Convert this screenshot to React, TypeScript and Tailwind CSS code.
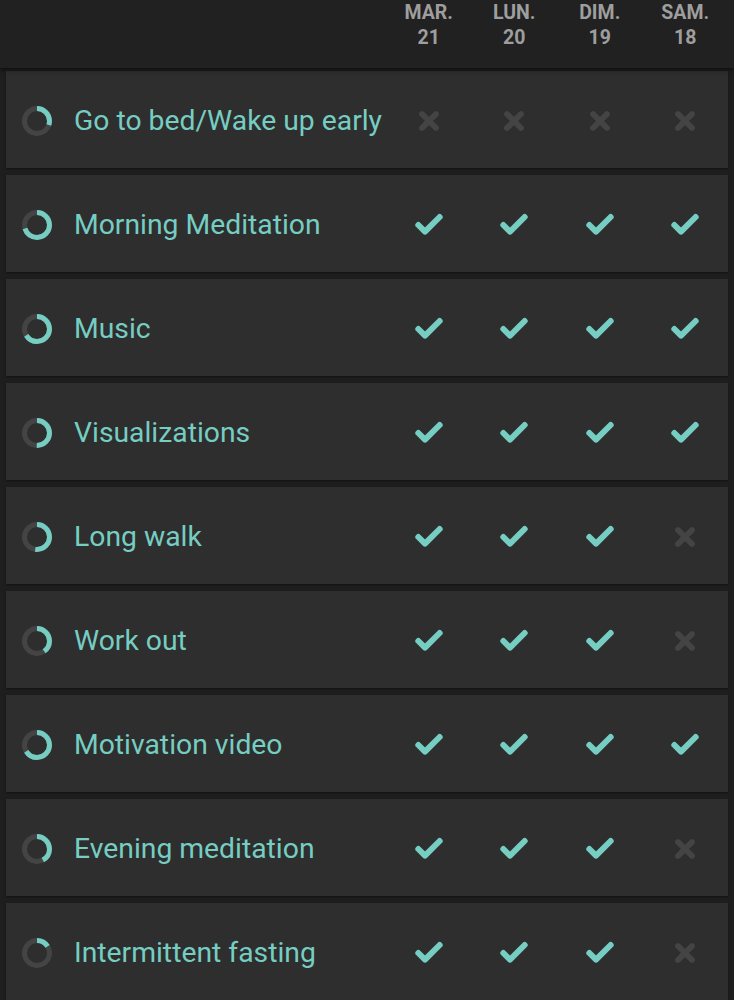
import { Check, X } from "lucide-react"

type Habit = {
  name: string
  progress: number
  days: boolean[]
}

const columns = [
  { day: "MAR.", date: "21" },
  { day: "LUN.", date: "20" },
  { day: "DIM.", date: "19" },
  { day: "SAM.", date: "18" },
]

const habits: Habit[] = [
  { name: "Go to bed/Wake up early", progress: 0.3, days: [false, false, false, false] },
  { name: "Morning Meditation", progress: 0.7, days: [true, true, true, true] },
  { name: "Music", progress: 0.66, days: [true, true, true, true] },
  { name: "Visualizations", progress: 0.5, days: [true, true, true, true] },
  { name: "Long walk", progress: 0.52, days: [true, true, true, false] },
  { name: "Work out", progress: 0.4, days: [true, true, true, false] },
  { name: "Motivation video", progress: 0.66, days: [true, true, true, true] },
  { name: "Evening meditation", progress: 0.42, days: [true, true, true, false] },
  { name: "Intermittent fasting", progress: 0.16, days: [true, true, true, false] },
]

function Ring({ value }: { value: number }) {
  const r = 12.5
  const c = 2 * Math.PI * r
  return (
    <svg width="32" height="32" viewBox="0 0 32 32" className="shrink-0">
      <circle cx="16" cy="16" r={r} fill="none" stroke="#444444" strokeWidth="5" />
      <circle
        cx="16"
        cy="16"
        r={r}
        fill="none"
        stroke="#76cdc2"
        strokeWidth="5"
        strokeDasharray={`${c * value} ${c}`}
        transform="rotate(-90 16 16)"
      />
    </svg>
  )
}

export default function App() {
  return (
    <div className="min-h-screen bg-[#1e1e1e] font-['Roboto',sans-serif]">
      {/* Header with dates */}
      <div className="h-[68px] bg-[#212121] shadow-[0_2px_4px_rgba(0,0,0,0.5)] flex px-[6px] relative z-10">
        <div className="flex-1" />
        {columns.map((c) => (
          <div
            key={c.day}
            className="w-[85.5px] flex flex-col items-center text-[19.5px] font-bold leading-[25px] text-[#9e9e9e]"
          >
            <span>{c.day}</span>
            <span>{c.date}</span>
          </div>
        ))}
      </div>

      {/* Habit rows */}
      <div className="flex flex-col gap-[7px] pt-[3px] px-[6px]">
        {habits.map((h) => (
          <div
            key={h.name}
            className="h-[97px] bg-[#2e2e2e] flex items-center shadow-[0_1px_2px_rgba(0,0,0,0.4)]"
          >
            <div className="flex-1 flex items-center pl-[15px] gap-[21px] min-w-0 pt-[3px]">
              <Ring value={h.progress} />
              <span className="text-[28.3px] text-[#76cdc2] whitespace-nowrap">{h.name}</span>
            </div>
            {h.days.map((done, i) => (
              <div key={i} className="w-[85.5px] flex justify-center pt-[3px]">
                {done ? (
                  <Check size={32} strokeWidth={4.5} className="text-[#76cdc2]" />
                ) : (
                  <X size={28} strokeWidth={5} className="text-[#444444]" />
                )}
              </div>
            ))}
          </div>
        ))}
      </div>
    </div>
  )
}
